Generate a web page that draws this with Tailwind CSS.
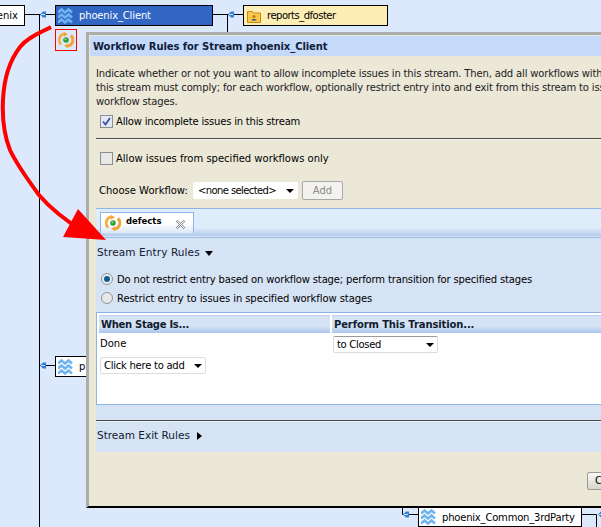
<!DOCTYPE html>
<html lang="en">
<head>
  <meta charset="UTF-8" />
  <title>Workflow Rules for Stream phoenix_Client</title>
  <script src="https://cdn.jsdelivr.net/npm/@tailwindcss/browser@4"></script>
</head>
<body class="bg-[#dce9fd]">
<div class="relative w-[601px] h-[527px] overflow-hidden bg-[#dce9fd] font-['DejaVu_Sans',sans-serif] text-[10px] text-black">

  <!-- Stream diagram behind the dialog -->
  <svg class="absolute left-0 top-0" width="601" height="527" fill="none">
    <defs>
      <g id="plug"><path d="M0 0l3-3h3v6H3z" fill="#2f80d8"/><path d="M1 0h4" stroke="#cfe4fb"/></g>
      <g id="waves" stroke-width="2.600" fill="none">
        <path d="M0 4l3.500-3 3.500 3 3.500-3 3.500 3"/><path d="M0 9l3.500-3 3.500 3 3.500-3 3.500 3"/><path d="M0 14l3.500-3 3.500 3 3.500-3 3.500 3"/>
      </g>
      <g id="flow" fill="none">
        <path d="M3.200 12.500A6 6 0 0 1 7 2" stroke="#f6b04a" stroke-width="3"/>
        <path d="M12.800 3.500A6 6 0 0 1 9 14" stroke="#f2a232" stroke-width="3"/>
        <path d="M6 0l4 2.200-4 2.400zM10 16l-4-2.200 4-2.400z" fill="#f2a232"/>
        <circle cx="8" cy="8" r="2.800" fill="#2f9e32"/>
        <circle cx="7.400" cy="7.300" r="1" fill="#8fdc7e"/>
      </g>
    </defs>
    <g stroke="#000">
      <path d="M39.500 14V527M25 14.500H55M227.500 14V33M213 14.500H243M39 365.500H55M402.500 508V514.500H418M581 514.500H596.500V527"/>
    </g>
    <use href="#plug" x="40" y="14.500"/>
    <use href="#plug" x="228" y="14.500"/>
    <use href="#plug" x="40" y="365.500"/>
    <use href="#plug" x="403" y="514.500"/>
    <use href="#plug" x="598" y="514.500"/>
  </svg>

  <div class="absolute left-[-2px] top-[5px] w-[27px] h-[21px] bg-white border border-black flex items-center justify-end pr-[6px]">enix</div>

  <div class="absolute left-[55px] top-[5px] w-[158px] h-[21px] bg-[#3166c5] border border-black flex items-center text-white">
    <svg class="ml-[2px] shrink-0" width="15" height="16" viewBox="0 0 15 15" fill="none" stroke="#6fb4ee"><use href="#waves"/></svg>
    <span class="ml-[6px] tracking-[-0.15px]">phoenix_Client</span>
  </div>

  <div class="absolute left-[243px] top-[5px] w-[145px] h-[21px] bg-[#fdeeb5] border border-black flex items-center">
    <svg class="ml-[3px] shrink-0" width="14" height="14" viewBox="0 0 14 14">
      <path d="M.5 2.500h5l1 1.500h7v9.500H.5z" fill="#fbc94a" stroke="#c98a12"/>
      <circle cx="7" cy="7.500" r="1.500" fill="#b5761a"/><path d="M4.500 11.500c0-2 5-2 5 0z" fill="#26478f"/>
    </svg>
    <span class="ml-[6px] tracking-[-0.5px]">reports_dfoster</span>
  </div>

  <div class="absolute left-[55px] top-[29px] w-[22px] h-[22px] border border-[#f00] flex items-center justify-center">
    <svg width="16" height="16" viewBox="0 0 16 16"><use href="#flow"/></svg>
  </div>

  <div class="absolute left-[55px] top-[356px] w-[40px] h-[21px] bg-white border border-black flex items-center">
    <svg class="ml-[2px] shrink-0" width="15" height="16" viewBox="0 0 15 15" fill="none" stroke="#6fb4ee"><use href="#waves"/></svg>
    <span class="ml-[6px]">p</span>
  </div>

  <div class="absolute left-[418px] top-[507px] w-[164px] h-[20px] bg-white border border-black flex items-center">
    <svg class="ml-[2px] shrink-0" width="15" height="16" viewBox="0 0 15 15" fill="none" stroke="#6fb4ee"><use href="#waves"/></svg>
    <span class="ml-[6px] tracking-[-0.2px]">phoenix_Common_3rdParty</span>
  </div>

  <!-- Dialog -->
  <div class="absolute left-[86px] top-[32px] w-[560px] h-[476px] bg-[#ebe8d8] border-l-[3px] border-t-[3px] border-[#adadad] border-b-2 border-b-black">
    <div class="ml-px mt-px h-[20px] bg-[#c5d9fb] flex items-center pl-[3px] font-bold text-[#10203a] tracking-[-0.08px]">Workflow Rules for Stream phoenix_Client</div>

    <div class="ml-[7px] mt-[11px] leading-[14px] whitespace-nowrap text-[#222] tracking-[-0.16px]">
      <p>Indicate whether or not you want to allow incomplete issues in this stream. Then, add all workflows with</p>
      <p>this stream must comply; for each workflow, optionally restrict entry into and exit from this stream to issues</p>
      <p>workflow stages.</p>
    </div>

    <div class="ml-[11px] mt-[5px] h-[14px] flex items-center gap-[3px]">
      <span class="w-[13px] h-[13px] border border-[#8a8f96] bg-[#e4e8f2] flex items-center justify-center">
        <svg width="9" height="9" viewBox="0 0 9 9" fill="none"><path d="M1 4.500l2.500 3L8 1" stroke="#3c50a8" stroke-width="1.800"/></svg>
      </span>
      <span class="tracking-[-0.2px]">Allow incomplete issues in this stream</span>
    </div>

    <div class="ml-[7px] mt-[10px] h-[2px] border-t border-[#4a4a4a] border-b-[#f6f4ea] border-b"></div>

    <div class="ml-[11px] mt-[11px] h-[14px] flex items-center gap-[3px]">
      <span class="w-[13px] h-[13px] border border-[#8a8f96] bg-[#e8e8e6]"></span>
      <span>Allow issues from specified workflows only</span>
    </div>

    <div class="ml-[10px] mt-[16px] h-[19px] flex items-center">
      <span class="w-[94px]">Choose Workflow:</span>
      <span class="w-[105px] h-[17px] bg-white rounded-[2px] flex items-center justify-between pl-[5px] pr-[4px] tracking-[-0.6px]">&lt;none selected&gt;<i class="w-0 h-0 border-x-[4px] border-x-transparent border-t-[4px] border-t-black"></i></span>
      <span class="ml-[4px] w-[41px] h-[19px] bg-[#f3f2ee] border border-[#a8a8a8] rounded-[2px] flex items-center justify-center text-[#8a8a8a]">Add</span>
    </div>

    <!-- Workflow tabs -->
    <div class="ml-[7px] mt-[8px] h-[244px] bg-[#d6e3f5]">
      <div class="relative h-[28px] border-t border-[#8fb4e6] bg-gradient-to-b from-[#dfecfa] from-70% to-[#b3cbec]">
        <div class="absolute left-[4px] top-[3px] w-[94px] h-[21px] bg-gradient-to-b from-white from-50% to-[#dbe8f8] border border-b-0 border-[#8fb4e6] flex items-start">
          <svg class="ml-[4px] mt-[2px] shrink-0" width="16" height="16" viewBox="0 0 16 16"><use href="#flow"/></svg>
          <span class="ml-[5px] mt-[2px] text-[8.500px] font-bold">defects</span>
          <svg class="absolute left-[74px] top-[6px]" width="11" height="11" viewBox="0 0 11 11" fill="none"><path d="M1.500 1.500l8 8M9.500 1.500l-8 8" stroke="#8c8c8c" stroke-width="2.400"/><path d="M1.500 1.500l8 8M9.500 1.500l-8 8" stroke="#fff" stroke-width="1"/></svg>
        </div>
      </div>
      <div class="h-px mt-px bg-[#9dbde9]"></div>

      <div class="ml-px mt-[8px] h-[14px] flex items-center text-[10.500px] text-[#102030] tracking-[0.1px]">
        <span>Stream Entry Rules</span><i class="ml-[5px] w-0 h-0 border-x-[4px] border-x-transparent border-t-[5px] border-t-black"></i>
      </div>

      <div class="ml-[5px] mt-[12px] h-[14px] flex items-center gap-[4px]">
        <span class="w-[12px] h-[12px] rounded-full border border-[#8d959c] bg-[#e6edf5] flex items-center justify-center"><i class="w-[6px] h-[6px] rounded-full bg-[#0f5f8f]"></i></span>
        <span class="tracking-[-0.15px]">Do not restrict entry based on workflow stage; perform transition for specified stages</span>
      </div>
      <div class="ml-[5px] mt-[5px] h-[14px] flex items-center gap-[4px]">
        <span class="w-[12px] h-[12px] rounded-full border border-[#8d959c] bg-[#e6e8ea]"></span>
        <span class="tracking-[-0.08px]">Restrict entry to issues in specified workflow stages</span>
      </div>

      <div class="mt-[7px] h-[93px] border border-r-0 border-[#8fb4e6] bg-white">
        <div class="flex h-[18px] mt-[2px] ml-[2px] font-bold text-[#102030]">
          <div class="w-[231px] pl-[2px] flex items-center border-t border-[#bcd2f0] bg-gradient-to-b from-[#d6e3f5] from-60% to-[#a9c6ee] tracking-[-0.3px]">When Stage Is...</div>
          <div class="ml-[2px] w-[280px] pl-[2px] flex items-center border-t border-[#bcd2f0] bg-gradient-to-b from-[#d6e3f5] from-60% to-[#a9c6ee] tracking-[-0.12px]">Perform This Transition...</div>
        </div>
        <div class="flex h-[21px] ml-[3px] mt-[3px]">
          <div class="w-[233px]">Done</div>
          <span class="w-[105px] h-[17px] border border-[#dcdcdc] border-t-[#9a9a9a] rounded-[2px] flex items-center justify-between pl-[3px] pr-[3px] tracking-[-0.3px]">to Closed<i class="w-0 h-0 border-x-[4px] border-x-transparent border-t-[4px] border-t-black"></i></span>
        </div>
        <span class="ml-[3px] w-[106px] h-[17px] border border-[#dcdcdc] rounded-[2px] flex items-center justify-between pl-[3px] pr-[3px] tracking-[-0.25px]">Click here to add<i class="w-0 h-0 border-x-[4px] border-x-transparent border-t-[4px] border-t-black"></i></span>
      </div>

      <div class="mt-[15px] h-[2px] border-t border-[#4a4a4a] border-b border-b-[#eef3fb]"></div>

      <div class="ml-px mt-[7px] h-[14px] flex items-center text-[10.500px] text-[#102030]">
        <span>Stream Exit Rules</span><i class="ml-[7px] w-0 h-0 border-y-[4px] border-y-transparent border-l-[5px] border-l-black"></i>
      </div>
    </div>

    <span class="absolute left-[498px] top-[437px] w-[60px] h-[18px] border border-[#9a9a9a] rounded-[2px] bg-gradient-to-b from-[#fafaf8] to-[#d8d5c8] pl-[7px] leading-[16px]">Close</span>
  </div>

  <!-- Red annotation arrow -->
  <svg class="absolute left-0 top-0 pointer-events-none" width="601" height="527" fill="none">
    <path d="M51 27C40 33 28 37 20 47C10 60 4 78 3 100C2 120 4 135 10 150C16 163 28 180 39 195C50 208 65 220 84 232" stroke="#f00" stroke-width="4"/>
    <path d="M78 209L63 237L106 240z" fill="#f00"/>
  </svg>
</div>
</body>
</html>
